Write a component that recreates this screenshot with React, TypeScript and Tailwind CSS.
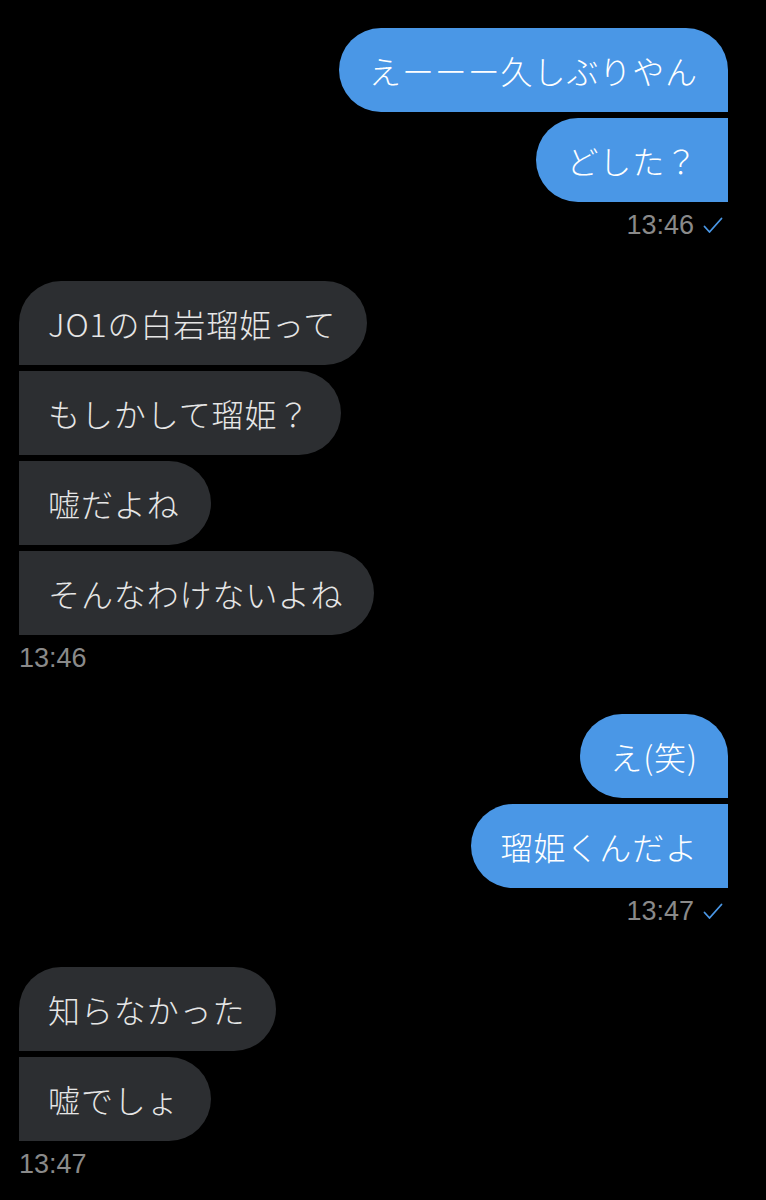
import React from "react";

const jp = { fontFamily: '"Noto Sans CJK JP", "Noto Sans", sans-serif' };
const num = { fontFamily: '"Liberation Sans", Arial, sans-serif' };

function Check() {
  return (
    <svg width="20" height="17" viewBox="0 0 20 17" className="ml-[9px]">
      <polyline points="1.5,9.5 6.5,15 18.5,1.5" fill="none" stroke="#4a97e6" strokeWidth="1.8" strokeLinecap="round" strokeLinejoin="round" />
    </svg>
  );
}

function Out({ lines, time }: { lines: string[]; time: string }) {
  return (
    <div className="flex flex-col items-end gap-[6px]">
      {lines.map((t, i) => (
        <div
          key={i}
          style={jp}
          className={
            "h-[84px] flex items-center px-[30px] bg-[#4a97e6] text-white text-[32px] font-light tracking-[0.9px] " +
            (i === 0 ? "rounded-[42px] rounded-br-none" : "rounded-l-[42px]")
          }
        >
          {t}
        </div>
      ))}
      <div className="flex items-center mt-[2px] mr-[5px] h-[30px]">
        <span style={num} className="text-[27px] text-[#8a8a8a] leading-none">{time}</span>
        <Check />
      </div>
    </div>
  );
}

function In({ lines, time }: { lines: string[]; time: string }) {
  return (
    <div className="flex flex-col items-start gap-[6px]">
      {lines.map((t, i) => (
        <div
          key={i}
          style={jp}
          className={
            "h-[84px] flex items-center pl-[29px] pr-[31px] bg-[#2c2e31] text-[#e6e6e6] text-[32px] font-light tracking-[0.9px] " +
            (i === 0 ? "rounded-[42px] rounded-bl-none" : "rounded-r-[42px]")
          }
        >
          {t}
        </div>
      ))}
      <div className="flex items-center mt-[2px] h-[30px]">
        <span style={num} className="text-[27px] text-[#8a8a8a] leading-none">{time}</span>
      </div>
    </div>
  );
}

export default function App() {
  return (
    <div className="w-[766px] h-[1200px] bg-black overflow-hidden">
      <div className="flex flex-col gap-[41px] pt-[28px] pl-[19px] pr-[38px]">
        <Out lines={["えーーー久しぶりやん", "どした？"]} time="13:46" />
        <In lines={["JO1の白岩瑠姫って", "もしかして瑠姫？", "嘘だよね", "そんなわけないよね"]} time="13:46" />
        <Out lines={["え(笑)", "瑠姫くんだよ"]} time="13:47" />
        <In lines={["知らなかった", "嘘でしょ"]} time="13:47" />
      </div>
    </div>
  );
}
